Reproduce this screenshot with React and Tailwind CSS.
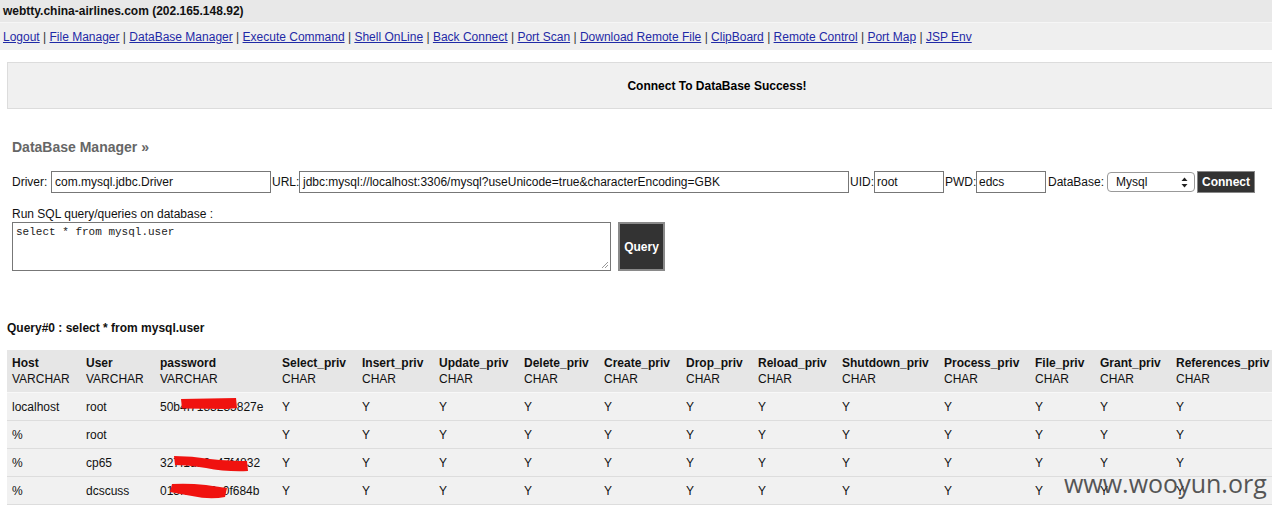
import React from "react";

const links = [
  "Logout",
  "File Manager",
  "DataBase Manager",
  "Execute Command",
  "Shell OnLine",
  "Back Connect",
  "Port Scan",
  "Download Remote File",
  "ClipBoard",
  "Remote Control",
  "Port Map",
  "JSP Env",
];

const cols = [
  { name: "Host", type: "VARCHAR", w: "w-[74px]" },
  { name: "User", type: "VARCHAR", w: "w-[74px]" },
  { name: "password", type: "VARCHAR", w: "w-[122px]" },
  { name: "Select_priv", type: "CHAR", w: "w-[80px]" },
  { name: "Insert_priv", type: "CHAR", w: "w-[77px]" },
  { name: "Update_priv", type: "CHAR", w: "w-[85px]" },
  { name: "Delete_priv", type: "CHAR", w: "w-[80px]" },
  { name: "Create_priv", type: "CHAR", w: "w-[82px]" },
  { name: "Drop_priv", type: "CHAR", w: "w-[72px]" },
  { name: "Reload_priv", type: "CHAR", w: "w-[84px]" },
  { name: "Shutdown_priv", type: "CHAR", w: "w-[102px]" },
  { name: "Process_priv", type: "CHAR", w: "w-[91px]" },
  { name: "File_priv", type: "CHAR", w: "w-[65px]" },
  { name: "Grant_priv", type: "CHAR", w: "w-[76px]" },
  { name: "References_priv", type: "CHAR", w: "w-[110px]" },
];

const rows = [
  { host: "localhost", user: "root", pw: "50b4f7183235827e", mark: 1 },
  { host: "%", user: "root", pw: "", mark: 0 },
  { host: "%", user: "cp65", pw: "327f1da0e47f4832", mark: 2 },
  { host: "%", user: "dcscuss", pw: "013f7a0e2c0f684b", mark: 3 },
];

function RedMark({ kind }) {
  if (kind === 1)
    return (
      <svg className="absolute left-[21px] top-[-2px] w-[56px] h-[12px] overflow-visible" viewBox="0 0 56 12">
        <path d="M0 1 L55 0 L56 10 L46 11 L1 10.5 Z" fill="#f0120f" />
      </svg>
    );
  if (kind === 2)
    return (
      <svg className="absolute left-[14px] top-[0px] w-[74px] h-[16px] overflow-visible" viewBox="0 0 74 16">
        <path d="M0 0 Q18 0 36 3 Q56 5 73 5 L74 15 Q52 16 32 12 Q14 9 1 9 Z" fill="#f0120f" />
      </svg>
    );
  if (kind === 3)
    return (
      <svg className="absolute left-[10px] top-[-1px] w-[58px] h-[17px] overflow-visible" viewBox="0 0 58 17">
        <path d="M2 1 Q18 0 36 2 Q50 4 57 5 L55 14 Q40 17 22 13 Q10 11 0 9 Z" fill="#f0120f" />
      </svg>
    );
  return null;
}

export default function App() {
  return (
    <div className="relative w-[1272px] h-[513px] overflow-hidden bg-white text-[12px] text-[#111] font-['Liberation_Sans',Arial,sans-serif]">
      {/* Title bar */}
      <div className="h-[22px] bg-[#e8e8e8] flex items-center pl-[3px] font-bold text-[12px] text-[#111]">
        webtty.china-airlines.com (202.165.148.92)
      </div>
      <div className="h-px bg-[#f6f6f6]" />
      {/* Links bar */}
      <div className="h-[27px] bg-[#efefef] flex items-center pl-[3px] text-[12px]">
        {links.map((l, i) => (
          <React.Fragment key={l}>
            {i > 0 && <span className="text-[#333] whitespace-pre"> | </span>}
            <a href="#" className="text-[#1f2aa6] underline">
              {l}
            </a>
          </React.Fragment>
        ))}
      </div>

      {/* Status box */}
      <div className="mt-[12px] ml-[7px] w-[1420px] h-[47px] bg-[#f0f0f0] border border-[#dcdcdc] flex items-center justify-center font-bold text-[12px] text-black">
        Connect To DataBase Success!
      </div>

      {/* Heading */}
      <div className="mt-[30px] ml-[12px] text-[14px] leading-[16px] font-bold text-[#666]">
        DataBase Manager »
      </div>

      {/* Form row */}
      <div className="mt-[16px] ml-[12px] flex items-center h-[22px] text-[12px]">
        <span className="w-[39px]">Driver:</span>
        <div className="w-[220px] h-[22px] border border-[#777] flex items-center px-[3px]">com.mysql.jdbc.Driver</div>
        <span className="w-[28px] pl-px">URL:</span>
        <div className="w-[550px] h-[22px] border border-[#777] flex items-center px-[3px]">
          jdbc:mysql://localhost:3306/mysql?useUnicode=true&amp;characterEncoding=GBK
        </div>
        <span className="w-[25px] pl-px">UID:</span>
        <div className="w-[70px] h-[22px] border border-[#777] flex items-center px-[2px]">root</div>
        <span className="w-[32px] pl-px">PWD:</span>
        <div className="w-[70px] h-[22px] border border-[#777] flex items-center px-[2px]">edcs</div>
        <span className="w-[61px] pl-[2px]">DataBase:</span>
        <div className="w-[88px] h-[20px] border border-[#999] rounded-[4px] bg-white flex items-center justify-between pl-[8px] pr-[6px]">
          <span>Mysql</span>
          <svg width="7" height="11" viewBox="0 0 7 11">
            <path d="M3.5 0.5 L6.5 4 L0.5 4 Z" fill="#222" />
            <path d="M3.5 10.5 L6.5 7 L0.5 7 Z" fill="#222" />
          </svg>
        </div>
        <div className="ml-[2px] w-[58px] h-[22px] bg-[#333] border border-[#888] text-white font-bold flex items-center justify-center text-[12px]">
          Connect
        </div>
      </div>

      {/* SQL label */}
      <div className="mt-[14px] ml-[12px] leading-[14px]">Run SQL query/queries on database :</div>
      <div className="mt-px ml-[12px] flex gap-[7px]">
        <div className="relative w-[599px] h-[49px] border border-[#777] bg-white px-[3px] pt-[3px] font-['Liberation_Mono',monospace] text-[11px] leading-[13px] text-[#222]">
          select * from mysql.user
          <svg className="absolute right-[1px] bottom-[1px]" width="8" height="8" viewBox="0 0 8 8">
            <path d="M7 1 L1 7 M7 4 L4 7" stroke="#999" strokeWidth="1" />
          </svg>
        </div>
        <div className="w-[47px] h-[49px] bg-[#333] border-2 border-[#8a8a8a] text-white font-bold flex items-center justify-center text-[12px]">
          Query
        </div>
      </div>

      {/* Query title */}
      <div className="mt-[50px] ml-[7px] font-bold leading-[14px]">Query#0 : select * from mysql.user</div>

      {/* Table */}
      <table className="mt-[15px] ml-[7px] border-collapse table-fixed w-[1274px] text-[12px]">
        <thead>
          <tr className="bg-[#e6e6e6]">
            {cols.map((c) => (
              <th key={c.name} className={`${c.w} text-left font-normal align-top px-[5px] pt-[5px] pb-[5px] leading-[16px] whitespace-nowrap border-b border-[#f8f8f8]`}>
                <div className="font-bold">{c.name}</div>
                <div>{c.type}</div>
              </th>
            ))}
          </tr>
        </thead>
        <tbody>
          {rows.map((r, i) => (
            <tr key={i} className="bg-[#f1f1f1] h-[28px] border-b border-[#dddddd]">
              <td className="px-[5px] whitespace-nowrap">{r.host}</td>
              <td className="px-[5px] whitespace-nowrap">{r.user}</td>
              <td className="px-[5px] whitespace-nowrap">
                <div className="relative leading-[14px]">
                  {r.pw || "\u00a0"}
                  <RedMark kind={r.mark} />
                </div>
              </td>
              {cols.slice(3).map((c) => (
                <td key={c.name} className="px-[5px]">Y</td>
              ))}
            </tr>
          ))}
        </tbody>
      </table>

      {/* Watermark */}
      <div className="absolute left-[1064px] top-[467px] text-[25px] leading-[32px] text-[#3a3a3a] opacity-85 font-['Open_Sans',sans-serif] whitespace-nowrap">
        www.wooyun.org
      </div>
    </div>
  );
}
